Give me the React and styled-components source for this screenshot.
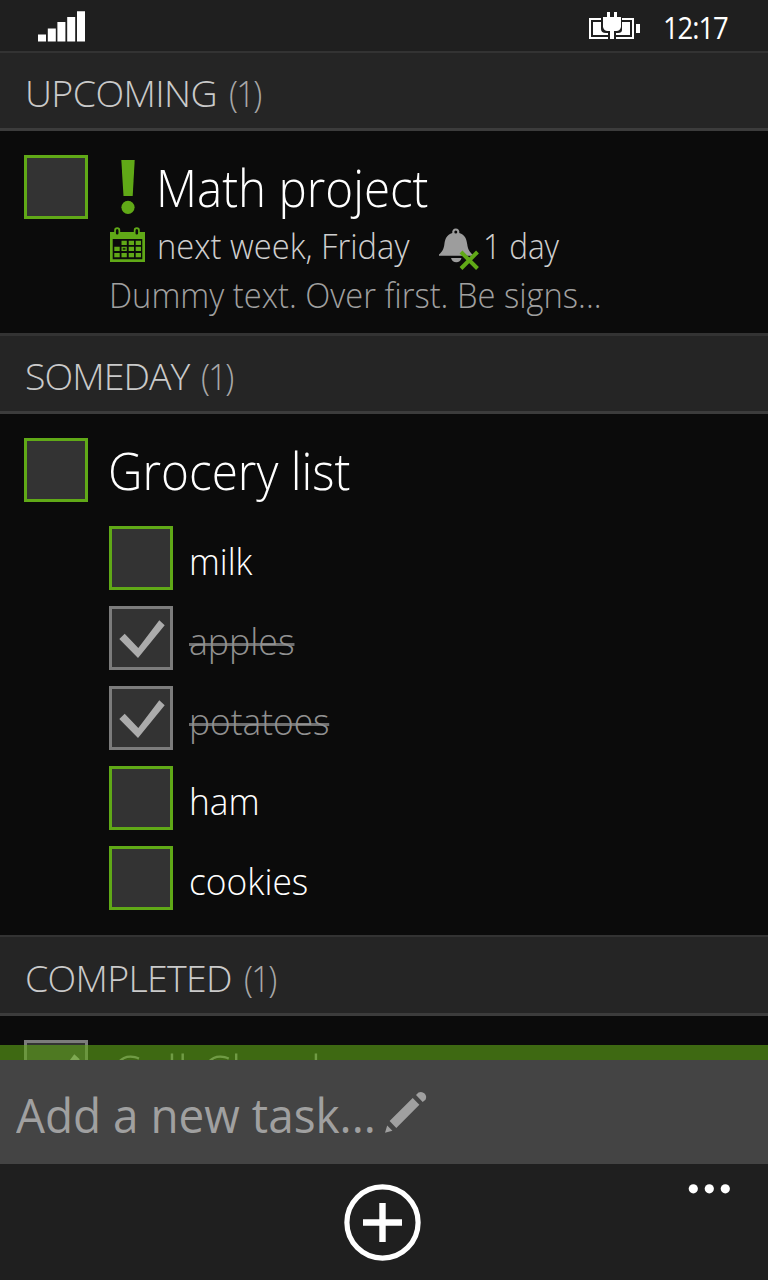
import React from 'react';
import styled, { createGlobalStyle } from 'styled-components';

const ACCENT = '#60a917';

const GlobalStyle = createGlobalStyle`
  *, *::before, *::after { box-sizing: border-box; }
  body {
    margin: 0;
    background: #0b0b0b;
    font-family: 'Open Sans', 'Noto Sans', sans-serif;
    font-weight: 300;
  }
  svg { display: block; flex: none; }
`;

const Screen = styled.div`
  display: flex;
  flex-direction: column;
  width: 768px;
  height: 1280px;
  overflow: hidden;
  background: #0b0b0b;
  color: #fff;
`;

const StatusBar = styled.header`
  display: flex;
  align-items: center;
  flex: none;
  height: 51px;
  padding: 0 32px 0 38px;
  background: #1f1f1f;
`;

const StatusIcons = styled.div`
  margin-left: auto;
  margin-right: 23px;
`;

const Clock = styled.time`
  width: 73px;
  padding-top: 2px;
  font-size: 31px;
  font-weight: 400;
  line-height: 54px;
  letter-spacing: -1.2px;
  white-space: nowrap;
  transform: scaleX(0.885);
  transform-origin: left;
`;

const TaskList = styled.main`
  flex: 1;
  min-height: 0;
  overflow: hidden;
`;

const GroupHeader = styled.h2`
  display: flex;
  align-items: flex-end;
  gap: 12px;
  height: ${(p) => p.$height}px;
  margin: 0;
  padding-left: 25px;
  background: #252525;
  border-top: ${(p) => p.$rule}px solid #333;
  border-bottom: 3px solid #3c3c3c;
  color: #cacaca;
  font-size: 37.5px;
  font-weight: 300;
  line-height: 70px;
  white-space: nowrap;
`;

const GroupName = styled.span`
  letter-spacing: ${(p) => p.$tracking}px;
`;

const GroupCount = styled.span`
  color: #a8a8a8;
  letter-spacing: -2px;
  transform: scaleX(0.88);
  transform-origin: left;
`;

const Task = styled.article`
  display: grid;
  grid-template-columns: 64px 1fr;
  column-gap: 21px;
  padding: 24px 24px ${(p) => p.$bottom}px;
`;

const Box = styled.span`
  display: grid;
  place-items: center;
  flex: none;
  width: 64px;
  height: 64px;
  background: #333;
  border: 3px solid ${(p) => (p.$done ? '#7c7c7c' : ACCENT)};
`;

const Title = styled.h3`
  display: flex;
  margin: 0;
  height: 61px;
  padding-left: ${(p) => (p.$done ? 3 : 0)}px;
  color: ${(p) => (p.$done ? '#888' : '#fff')};
  font-size: 51px;
  font-weight: 300;
  line-height: ${(p) => (p.$done ? 66 : 64)}px;
  white-space: nowrap;
`;

const Squeeze = styled.span`
  display: inline-block;
  white-space: nowrap;
  transform: scaleX(${(p) => p.$x});
  transform-origin: left;
`;

const TitleText = styled(Squeeze)`
  margin-left: -1px;
`;

const PriorityMark = styled.span`
  padding: 5px 22px 0 12px;
`;

const MetaRow = styled.div`
  display: flex;
  align-items: center;
  height: 48px;
  margin-top: 6px;
  color: #cfcfcf;
  font-size: 35px;
  line-height: 50px;

  > svg:first-child {
    margin-top: -2px;
  }
`;

const DueDate = styled.span`
  width: 294px;
  padding-left: 12px;
`;

const BellSlot = styled.span`
  padding-top: 6px;
`;

const Reminder = styled.span`
  padding-left: 2px;
`;

const Note = styled.p`
  margin: 0;
  color: #a0a0a0;
  font-size: 35px;
  line-height: 50px;
  height: 48px;
`;

const SubList = styled.ul`
  display: flex;
  flex-direction: column;
  gap: 16px;
  margin: 27px 0 0;
  padding: 0;
  list-style: none;
`;

const SubItem = styled.li`
  display: flex;
  gap: 16px;
  height: 64px;
  font-size: 37.5px;
  line-height: 69px;
`;

const SubLabel = styled(Squeeze)`
  position: relative;
  color: ${(p) => (p.$done ? '#919191' : '#fff')};

  &::after {
    content: '';
    display: ${(p) => (p.$done ? 'block' : 'none')};
    position: absolute;
    top: 37px;
    left: 0;
    right: 0;
    height: 3px;
    background: rgba(145, 145, 145, 0.75);
  }
`;

const Footer = styled.footer`
  position: relative;
  z-index: 1;
  flex: none;
  margin-top: -15px;
`;

const AccentStrip = styled.div`
  height: 15px;
  background: rgba(96, 169, 23, 0.6);
`;

const NewTask = styled.div`
  display: flex;
  height: 104px;
  padding: 0 16px;
  background: #444;
  color: #a0a0a0;
  font-size: 47px;
  font-weight: 400;
  line-height: 111px;
`;

const NewTaskLabel = styled(Squeeze)`
  width: 368px;
`;

const PencilSlot = styled.span`
  padding-top: 29px;
`;

const AppBar = styled.nav`
  display: grid;
  grid-template-columns: 1fr 77px 1fr;
  height: 116px;
  padding: 20px 38px 0 34px;
  background: #1f1f1f;
`;

const BarButton = styled.button`
  grid-column: ${(p) => p.$column};
  justify-self: ${(p) => p.$align};
  align-self: start;
  padding: 0;
  border: 0;
  background: none;
`;

const SignalIcon = () => (
  <svg width="48" height="32" viewBox="0 0 48 32" fill="#fff">
    <path d="M0 24.500h8V31.500H0zM9.800 18.500h8V31.500h-8zM19.400 12h8v19.500h-8zM29.200 7h8v24.500h-8zM39 1.200h8V31.500h-8z" />
  </svg>
);

const BatteryIcon = () => (
  <svg width="51" height="28" viewBox="0 0 51 28">
    <path d="M1 7h43v19H1z" fill="none" stroke="#fff" strokeWidth="2" />
    <path d="M4 10h37v13H4zM47 12h4v9h-4z" fill="#fff" />
    <path d="M12 4h21v14q0 3-4 3h-2v7h-8v-7h-2q-5 0-5-4z" fill="#1f1f1f" />
    <path d="M18 0h3v5h4V0h3v5h4v10q-1 4-4.500 4H25v8h-4v-8h-2.500Q15 19 14 15V5h4z" fill="#fff" />
  </svg>
);

const PriorityIcon = () => (
  <svg width="14" height="55" viewBox="0 0 14 55" fill={ACCENT}>
    <path d="M.3 0h13.400l-2 36H2.500z" />
    <circle cx="7" cy="47.300" r="6.600" />
  </svg>
);

const CalendarIcon = () => (
  <svg width="36" height="36" viewBox="0 0 36 36">
    <path fill={ACCENT} fillRule="evenodd" d="M1 5h4.200V3q0-2.700 3-2.700t3 2.700v2h13.600V3q0-2.700 3-2.700t3 2.700v2H36v30H1zM3.700 12v20.300h29.600V12z" />
    <path fill="#0b0b0b" d="M6.900 3.500q0-1.500 1.300-1.500T9.500 3.500v2.700q0 1.200-1.300 1.200T6.900 6.200zM26.500 3.500q0-1.500 1.300-1.500t1.300 1.500v2.700q0 1.200-1.300 1.200t-1.300-1.200z" />
    <path fill={ACCENT} d="M12.500 13.700h5.300v4.200h-5.300zM19.700 13.700H25v4.200h-5.300zM26.700 13.700H32v4.200h-5.300zM5.300 19.700h5.400V24H5.300zM12.500 19.700h5.300V24h-5.300zM19.700 19.700H25V24h-5.300zM26.700 19.700H32V24h-5.300zM5.300 26h5.400v4.200H5.300zM12.500 26h5.300v4.200h-5.300zM19.700 26H25v4.200h-5.300zM26.700 26H32v4.200h-5.300z" />
    <path fill="#1c3306" d="M13.800 20.900h2.700v1.900h-2.700z" />
  </svg>
);

const BellIcon = () => (
  <svg width="42" height="44" viewBox="0 0 42 44">
    <path fill="#9d9d9d" fillRule="evenodd" d="M16.800 1.500a3.600 3.600 0 0 1 3.500 4.400C26 7.500 27.500 12 28.200 17c.6 5 2 7.500 5.400 10.500v1.300H0v-1.300C3.400 24.500 4.800 22 5.400 17 6 12 7.700 7.500 13.300 5.900a3.600 3.600 0 0 1 3.500-4.400zm0 1.900a1.500 1.500 0 1 0 0 3 1.500 1.500 0 0 0 0-3z" />
    <path fill="#9d9d9d" d="M12 31h10.500q-1.300 4.300-5.200 4.300T12 31z" />
    <path d="M22 25l16.500 16.500M38.500 25L22 41.500" stroke={ACCENT} strokeWidth="4" />
  </svg>
);

const CheckIcon = () => (
  <svg width="58" height="58" viewBox="3 3 58 58" fill="#ababab">
    <path d="M10.300 33l5.400-5.300L29.300 42l21-27.700 5.400 5L29 52z" />
  </svg>
);

const PencilIcon = () => (
  <svg width="44" height="44" viewBox="0 0 44 44" fill="#a0a0a0">
    <path d="M1 43.700L3.200 36.500l5.200 5.200zM28.700 9l6.700 6.700L12.300 39l-6.700-7zM32 6l2.500-2.500a5.300 5.300 0 0 1 7 7.200L38.700 13z" />
  </svg>
);

const AddIcon = () => (
  <svg width="77" height="77" viewBox="0 0 77 77" fill="none" stroke="#fff">
    <circle cx="38.500" cy="38.500" r="35.600" strokeWidth="5.200" />
    <path d="M19 38.500h39M38.500 19v39" strokeWidth="6.400" />
  </svg>
);

const MoreIcon = () => (
  <svg width="42" height="10" viewBox="0 0 42 10" fill="#fff">
    <circle cx="5.300" cy="4.800" r="4.600" />
    <circle cx="21.300" cy="4.800" r="4.600" />
    <circle cx="37.300" cy="4.800" r="4.600" />
  </svg>
);

const Checkbox = ({ done }) => <Box $done={done}>{done && <CheckIcon />}</Box>;

const Group = ({ name, count, tracking, height = 81, rule = 3 }) => (
  <GroupHeader $height={height} $rule={rule}>
    <GroupName $tracking={tracking}>{name}</GroupName>
    <GroupCount>({count})</GroupCount>
  </GroupHeader>
);

const groceries = [
  { label: 'milk', x: 0.93 },
  { label: 'apples', x: 0.95, done: true },
  { label: 'potatoes', x: 0.941, done: true },
  { label: 'ham', x: 0.94 },
  { label: 'cookies', x: 0.943 },
];

export default function App() {
  return (
    <>
      <GlobalStyle />
      <Screen>
        <StatusBar>
          <SignalIcon />
          <StatusIcons>
            <BatteryIcon />
          </StatusIcons>
          <Clock>12:17</Clock>
        </StatusBar>

        <TaskList>
          <Group name="UPCOMING" count={1} tracking={-0.6} height={80} rule={2} />
          <Task $bottom={15}>
            <Checkbox />
            <div>
              <Title>
                <PriorityMark>
                  <PriorityIcon />
                </PriorityMark>
                <TitleText $x={0.932}>Math project</TitleText>
              </Title>
              <MetaRow>
                <CalendarIcon />
                <DueDate>
                  <Squeeze $x={0.935}>next week, Friday</Squeeze>
                </DueDate>
                <BellSlot>
                  <BellIcon />
                </BellSlot>
                <Reminder>
                  <Squeeze $x={0.9}>1 day</Squeeze>
                </Reminder>
              </MetaRow>
              <Note>
                <Squeeze $x={0.935}>Dummy text. Over first. Be signs...</Squeeze>
              </Note>
            </div>
          </Task>

          <Group name="SOMEDAY" count={1} tracking={-0.95} />
          <Task $bottom={25}>
            <Checkbox />
            <div>
              <Title>
                <TitleText $x={0.935}>Grocery list</TitleText>
              </Title>
              <SubList>
                {groceries.map((item) => (
                  <SubItem key={item.label}>
                    <Checkbox done={item.done} />
                    <SubLabel $x={item.x} $done={item.done}>
                      {item.label}
                    </SubLabel>
                  </SubItem>
                ))}
              </SubList>
            </div>
          </Task>

          <Group name="COMPLETED" count={1} tracking={-0.7} rule={2} />
          <Task $bottom={15}>
            <Checkbox done />
            <Title $done>
              <TitleText $x={0.945}>Call Chuck</TitleText>
            </Title>
          </Task>
        </TaskList>

        <Footer>
          <AccentStrip />
          <NewTask>
            <NewTaskLabel $x={0.976}>Add a new task...</NewTaskLabel>
            <PencilSlot>
              <PencilIcon />
            </PencilSlot>
          </NewTask>
          <AppBar>
            <BarButton $column={2} $align="center" aria-label="Add">
              <AddIcon />
            </BarButton>
            <BarButton $column={3} $align="end" aria-label="More">
              <MoreIcon />
            </BarButton>
          </AppBar>
        </Footer>
      </Screen>
    </>
  );
}
